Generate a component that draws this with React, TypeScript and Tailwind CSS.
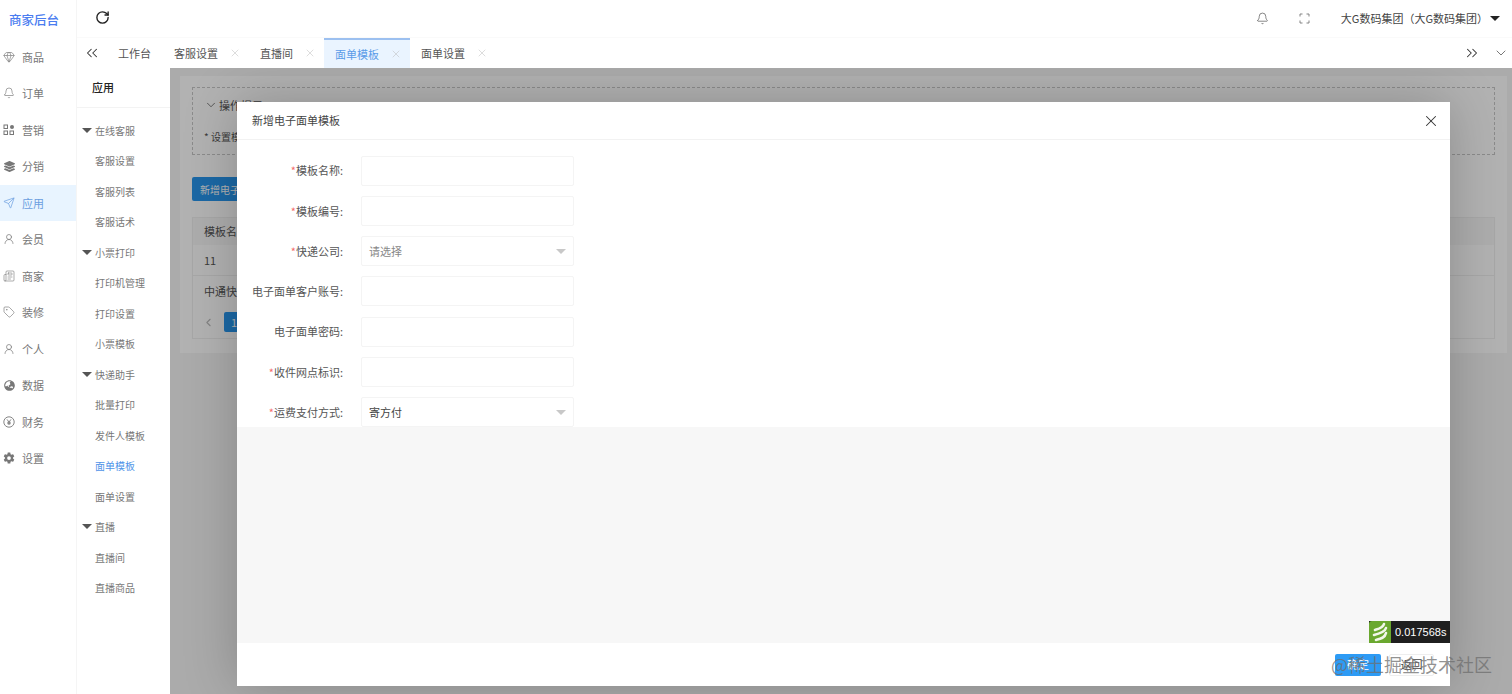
import React from 'react';
import {
  Bell,
  ChevronDown,
  ChevronLeft,
  ChevronsLeft,
  ChevronsRight,
  Gem,
  Newspaper,
  RotateCw,
  Send,
  Tag,
  UserRound,
  X,
} from 'lucide-react';
import { FaGlobeAsia, FaLayerGroup } from 'react-icons/fa';
import { IoSettingsSharp } from 'react-icons/io5';

const GridIcon = () => (
  <svg width="12" height="12" viewBox="0 0 12 12" fill="none" stroke="currentColor" strokeWidth="1">
    <rect x="1" y="1" width="3.5" height="3.5" />
    <rect x="1" y="7" width="3.5" height="3.5" />
    <rect x="7" y="7" width="3.5" height="3.5" />
    <circle cx="9" cy="3" r="2" fill="currentColor" stroke="none" />
  </svg>
);

const YenIcon = () => (
  <svg width="12" height="12" viewBox="0 0 12 12" fill="none" stroke="currentColor" strokeWidth="0.9">
    <circle cx="6" cy="6" r="5.2" />
    <path d="M4 3.4 6 6l2-2.6M6 6v3M4.3 6.3h3.4M4.3 7.7h3.4" />
  </svg>
);

const NAV_ITEMS = [
  { label: '商品', icon: <Gem size={12} strokeWidth={1.3} /> },
  { label: '订单', icon: <Bell size={12} strokeWidth={1.3} /> },
  { label: '营销', icon: <GridIcon /> },
  { label: '分销', icon: <FaLayerGroup size={11} /> },
  { label: '应用', icon: <Send size={12} strokeWidth={1.4} />, active: true },
  { label: '会员', icon: <UserRound size={12} strokeWidth={1.4} /> },
  { label: '商家', icon: <Newspaper size={12} strokeWidth={1.2} /> },
  { label: '装修', icon: <Tag size={12} strokeWidth={1.3} /> },
  { label: '个人', icon: <UserRound size={12} strokeWidth={1.4} /> },
  { label: '数据', icon: <FaGlobeAsia size={11} /> },
  { label: '财务', icon: <YenIcon /> },
  { label: '设置', icon: <IoSettingsSharp size={12} /> },
];

const APP_MENU = [
  { label: '在线客服', group: true },
  { label: '客服设置' },
  { label: '客服列表' },
  { label: '客服话术' },
  { label: '小票打印', group: true },
  { label: '打印机管理' },
  { label: '打印设置' },
  { label: '小票模板' },
  { label: '快递助手', group: true },
  { label: '批量打印' },
  { label: '发件人模板' },
  { label: '面单模板', active: true },
  { label: '面单设置' },
  { label: '直播', group: true },
  { label: '直播间' },
  { label: '直播商品' },
];

const TABS = [
  { label: '工作台', closable: false },
  { label: '客服设置', closable: true },
  { label: '直播间', closable: true },
  { label: '面单模板', closable: true, active: true },
  { label: '面单设置', closable: true },
];

const FIELDS = [
  { label: '模板名称:', required: true },
  { label: '模板编号:', required: true },
  { label: '快递公司:', required: true, select: '请选择', placeholder: true },
  { label: '电子面单客户账号:' },
  { label: '电子面单密码:' },
  { label: '收件网点标识:', required: true },
  { label: '运费支付方式:', required: true, select: '寄方付' },
];

const Caret = ({ className }: { className: string }) => (
  <span
    className={`h-0 w-0 border-x-[5px] border-t-[5px] border-x-transparent ${className}`}
  />
);

const FormRow = ({ field }: { field: (typeof FIELDS)[number] }) => (
  <div className="flex h-[30px] shrink-0 items-center">
    <label className="w-[106px] text-right text-[11px] text-[#555]">
      {field.required && <span className="text-[#f56c6c]">*</span>}
      {field.label}
    </label>
    <div className="ml-[18px] flex h-[30px] w-[213px] items-center justify-between rounded-[2px] border border-[#f4f4f4] pl-[7px] pr-[7px] text-[11px]">
      {field.select && (
        <>
          <span className={field.placeholder ? 'text-[#888]' : 'text-[#444]'}>
            {field.select}
          </span>
          <Caret className="border-t-[#c8c8c8]" />
        </>
      )}
    </div>
  </div>
);

export default function App() {
  return (
    <div className="relative flex h-[694px] w-[1512px] overflow-hidden bg-white font-['Noto_Sans_CJK_SC','Liberation_Sans',sans-serif] text-[#555]">
      <aside className="w-[77px] shrink-0 border-r border-[#f5f5f5]">
        <div className="flex h-[38.5px] items-center pl-[9px] pt-[2px] text-[12.5px] font-medium text-[#4b7df0]">
          商家后台
        </div>
        <nav className="flex flex-col">
          {NAV_ITEMS.map(item => (
            <div
              key={item.label}
              className={`flex h-[36.5px] items-center gap-[7px] pl-[3px] text-[11px] ${
                item.active ? 'bg-[#e8f4ff] text-[#6a9ee0]' : 'text-[#777]'
              }`}
            >
              <span className="flex w-[12px] justify-center">{item.icon}</span>
              {item.label}
            </div>
          ))}
        </nav>
      </aside>

      <div className="flex min-w-0 flex-1 flex-col">
        <header className="flex h-[38px] shrink-0 items-center border-b border-[#fafafa] pl-[18px] pr-[12px]">
          <RotateCw size={15} strokeWidth={2.2} className="-mt-[2px] text-[#222]" />
          <div className="ml-auto flex items-center text-[#555]">
            <Bell size={13} strokeWidth={1.3} />
            <svg
              width="11"
              height="11"
              viewBox="0 0 11 11"
              fill="none"
              stroke="currentColor"
              strokeWidth="0.9"
              className="ml-[30px] text-[#777]"
            >
              <path d="M1 3.5V1h2.5M7.5 1H10v2.5M10 7.5V10H7.5M3.5 10H1V7.5" />
            </svg>
            <span className="ml-[31px] text-[11px] text-[#444]">
              大G数码集团（大G数码集团）
            </span>
            <Caret className="ml-[2px] border-t-[#222]" />
          </div>
        </header>

        <div className="flex h-[30px] shrink-0 items-center text-[11px]">
          <ChevronsLeft size={18} strokeWidth={1.4} className="ml-[6px] text-[#333]" />
          <div className="ml-[6px] flex h-full items-stretch">
            {TABS.map(tab => (
              <div
                key={tab.label}
                className={`flex items-center pl-[11px] ${tab.closable ? 'pr-[8px]' : 'pr-[12px]'} ${
                  tab.active
                    ? 'border-t-2 border-[#9cc0f0] bg-[#eaf4ff] text-[#5a9be8]'
                    : 'text-[#555]'
                }`}
              >
                <span>{tab.label}</span>
                {tab.closable && (
                  <X size={12} strokeWidth={1} className="ml-[11px] text-[#bbb]" />
                )}
              </div>
            ))}
          </div>
          <ChevronsRight size={18} strokeWidth={1.4} className="ml-auto text-[#333]" />
          <ChevronDown size={16} strokeWidth={1.2} className="ml-[12px] mr-[3px] text-[#555]" />
        </div>

        <div className="flex min-h-0 flex-1">
          <div className="w-[93px] shrink-0">
            <div className="flex h-[40px] items-center border-b border-[#f3f3f3] pl-[15px] text-[11px] font-medium text-[#222]">
              应用
            </div>
            <div className="flex flex-col pt-[7px]">
              {APP_MENU.map(item => (
                <div
                  key={item.label}
                  className={`flex h-[30.5px] items-center text-[10px] ${
                    item.active ? 'text-[#4f94e8]' : 'text-[#777]'
                  } ${item.group ? 'pl-[5px]' : 'pl-[18px]'}`}
                >
                  {item.group && <Caret className="mr-[3px] border-t-[#555]" />}
                  {item.label}
                </div>
              ))}
            </div>
          </div>

          <main className="min-w-0 flex-1 bg-[#f5f5f5] pb-[8px] pl-[10px] pr-[5px] pt-[8px]">
            <div className="h-[277px] bg-white px-[12px] pt-[11px] text-[11px] text-[#555]">
              <div className="h-[68px] border border-dashed border-[#c8c8c8] px-[11px] pt-[9px]">
                <div className="flex items-center gap-[1px]">
                  <ChevronDown size={14} strokeWidth={1.3} />
                  操作提示
                </div>
                <div className="mt-[15px] text-[10px]">* 设置模板</div>
              </div>
              <button className="mt-[22px] h-[24px] w-[90px] rounded-[2px] bg-[#2795ec] pl-[8px] text-left text-[10px] text-white">
                新增电子面单
              </button>
              <div className="mt-[16px] border border-[#f0f0f0]">
                <div className="flex h-[27px] items-center bg-[#f8f8f8] px-[11px]">模板名称</div>
                <div className="flex h-[31px] items-center border-b border-[#f0f0f0] px-[11px]">11</div>
                <div className="flex h-[31px] items-center px-[11px]">中通快递</div>
                <div className="flex h-[31px] items-center gap-[9px] px-[9px] pb-[1px]">
                  <ChevronLeft size={13} className="text-[#bbb]" />
                  <span className="flex h-[20px] w-[20px] items-center justify-center rounded-[2px] bg-[#2795ec] text-white">1</span>
                </div>
              </div>
            </div>
          </main>
        </div>
      </div>

      {/* mask over the content area only, sidebars stay lit */}
      <div className="absolute bottom-0 left-[170px] right-0 top-[68px] overflow-hidden bg-black/30">
        <div className="absolute left-[67px] top-[34px] flex h-[584px] w-[1213px] flex-col bg-white shadow-[0_0_50px_rgba(0,0,0,0.22)]">
          <div className="flex h-[38px] shrink-0 items-center justify-between border-b border-[#f2f2f2] pl-[15px] pr-[10px] text-[11px] text-[#444]">
            新增电子面单模板
            <X size={18} strokeWidth={1.4} className="text-[#333]" />
          </div>
          <div className="flex h-[287px] shrink-0 flex-col gap-[10.3px] overflow-hidden pt-[15.5px]">
            {FIELDS.map(field => (
              <FormRow key={field.label} field={field} />
            ))}
          </div>
          <div className="relative flex-1 bg-[#f7f7f7]">
            <div className="absolute bottom-0 right-0 flex h-[22px] w-[81px] items-center bg-[#1f1f1f]">
              <div className="flex h-full w-[22px] items-center justify-center rounded-tl-[3px] bg-[#6aa82f]">
                <svg width="22" height="22" viewBox="0 0 22 22" fill="none" stroke="#f2f7ea" strokeWidth="2.6" strokeLinecap="round">
                  <path d="M6 9c3-1 8-2 9-6" />
                  <path d="M5 14c4-1 11-3 12-7" />
                  <path d="M7 19c4-1 9-2 10-7" />
                </svg>
              </div>
              <span className="ml-[4px] font-['Liberation_Sans',sans-serif] text-[11px] text-white">
                0.017568s
              </span>
            </div>
          </div>
          <div className="flex h-[43px] shrink-0 items-center justify-end gap-[8px] pr-[16px] text-[11px]">
            <button className="h-[22px] w-[46px] rounded-[2px] bg-[#2d9bf5] text-white">确定</button>
            <button className="h-[22px] w-[45px] rounded-[2px] border border-[#eee] text-[#444]">返回</button>
          </div>
        </div>
      </div>

      <div className="absolute left-[1331px] top-[653px] text-[18px] leading-[22px] text-[#6e6e6e]/75">
        @稀土掘金技术社区
      </div>
    </div>
  );
}
